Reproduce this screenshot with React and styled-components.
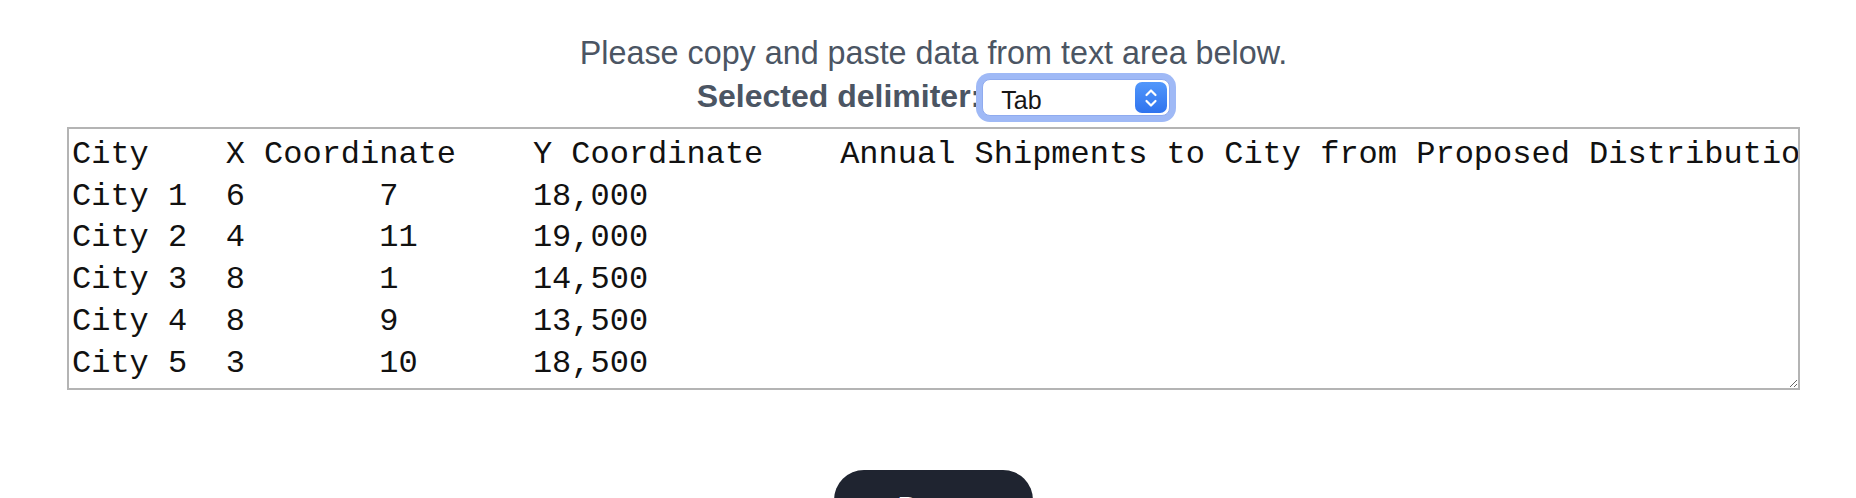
import React from "react";
import styled, { createGlobalStyle } from "styled-components";

const GlobalStyle = createGlobalStyle`
  html, body {
    margin: 0;
    padding: 0;
    background: #ffffff;
  }
  body {
    font-family: "Liberation Sans", Arial, Helvetica, sans-serif;
    overflow: hidden;
  }
`;

const Page = styled.main`
  padding: 35px 56px 0 67px;
`;

const Intro = styled.p`
  margin: 0;
  text-align: center;
  font-size: 32.3px;
  line-height: 37px;
  color: #4b5563;
`;

const DelimiterRow = styled.div`
  display: flex;
  justify-content: center;
  align-items: flex-start;
  height: 51px;
`;

const Label = styled.label`
  margin-top: 3px;
  font-size: 32px;
  line-height: 42px;
  font-weight: 700;
  color: #4b5563;
`;

const SelectWrap = styled.div`
  position: relative;
  margin: 7px 0 0 1px;
  width: 188px;
  height: 37px;
`;

const Select = styled.select`
  appearance: none;
  -webkit-appearance: none;
  box-sizing: border-box;
  width: 100%;
  height: 100%;
  margin: 0;
  padding: 4px 0 0 18px;
  border: 1px solid #8fabef;
  border-radius: 8px;
  box-shadow: 0 0 0 6px #9fb9f6;
  background: #ffffff;
  color: #161616;
  font-family: "Liberation Sans", Arial, sans-serif;
  font-size: 25px;
  outline: none;
`;

const Stepper = styled.span`
  position: absolute;
  top: 3px;
  right: 3px;
  width: 32px;
  height: 31px;
  border-radius: 7px;
  background: linear-gradient(#5197fb, #2f73ee);
  display: flex;
  align-items: center;
  justify-content: center;
  pointer-events: none;
`;

const DataArea = styled.textarea`
  display: block;
  box-sizing: border-box;
  width: 100%;
  height: 263px;
  margin: 4px 0 0;
  padding: 5px 3px 3px;
  border: 2px solid #b4b4b4;
  border-radius: 0;
  background: #ffffff;
  color: #111111;
  font-family: "Liberation Mono", "Courier New", monospace;
  font-size: 32px;
  line-height: 41.7px;
  white-space: pre;
  overflow: hidden;
  tab-size: 8;
  resize: both;
  outline: none;
`;

const ButtonRow = styled.div`
  display: flex;
  justify-content: center;
  margin-top: 80px;
`;

const ActionButton = styled.button`
  box-sizing: border-box;
  width: 199px;
  height: 64px;
  padding: 18px 0 10px;
  border: none;
  border-radius: 30px;
  background: #1f2430;
  color: #ffffff;
  font-family: "Liberation Sans", Arial, sans-serif;
  font-size: 26px;
  line-height: 36px;
  font-weight: 700;
  text-align: center;
`;

const data =
  "City\tX Coordinate\tY Coordinate\tAnnual Shipments to City from Proposed Distribution Center\n" +
  "City 1\t6\t7\t18,000\n" +
  "City 2\t4\t11\t19,000\n" +
  "City 3\t8\t1\t14,500\n" +
  "City 4\t8\t9\t13,500\n" +
  "City 5\t3\t10\t18,500";

export default function App() {
  return (
    <>
      <GlobalStyle />
      <Page>
        <Intro>Please copy and paste data from text area below.</Intro>
        <DelimiterRow>
          <Label htmlFor="delimiter">Selected delimiter:</Label>
          <SelectWrap>
            <Select id="delimiter" defaultValue="tab">
              <option value="tab">Tab</option>
              <option value="comma">Comma</option>
              <option value="semicolon">Semicolon</option>
              <option value="space">Space</option>
            </Select>
            <Stepper>
              <svg width="16" height="24" viewBox="0 0 16 24" fill="none">
                <path
                  d="M3.5 9 L8 4.5 L12.5 9"
                  stroke="#ffffff"
                  strokeWidth="2.2"
                  strokeLinecap="round"
                  strokeLinejoin="round"
                />
                <path
                  d="M3.5 15 L8 19.5 L12.5 15"
                  stroke="#ffffff"
                  strokeWidth="2.2"
                  strokeLinecap="round"
                  strokeLinejoin="round"
                />
              </svg>
            </Stepper>
          </SelectWrap>
        </DelimiterRow>
        <DataArea defaultValue={data} spellCheck={false} wrap="off" />
        <ButtonRow>
          <ActionButton type="button">Parse</ActionButton>
        </ButtonRow>
      </Page>
    </>
  );
}
